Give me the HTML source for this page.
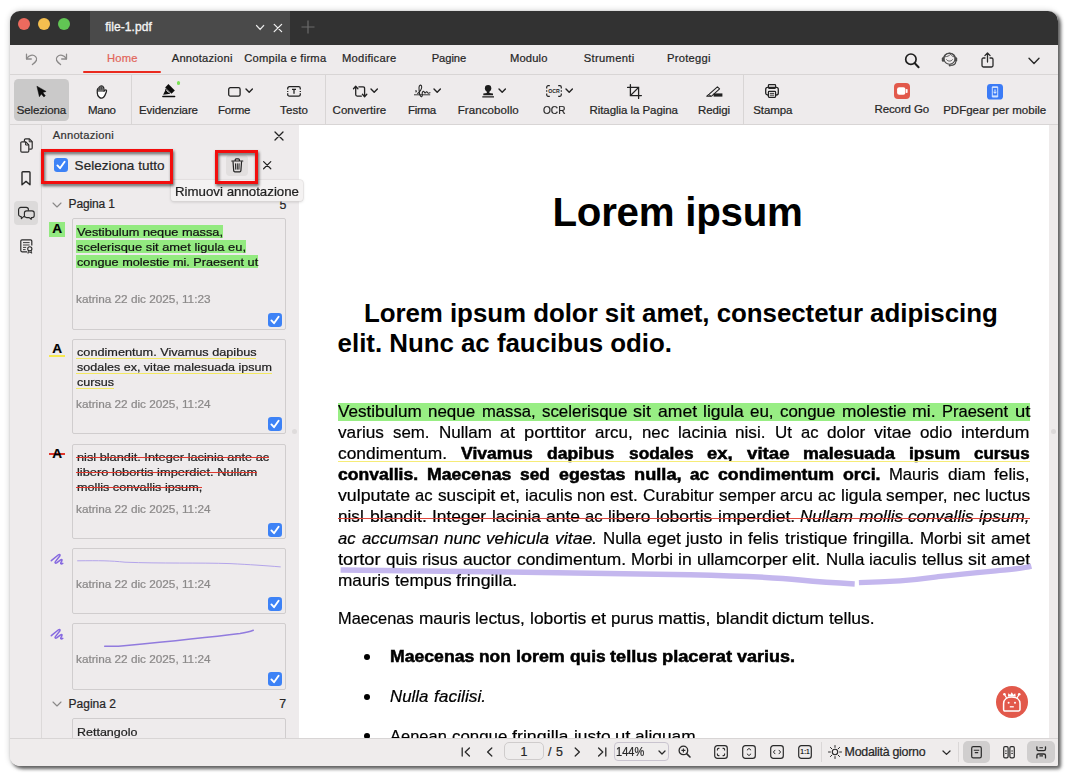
<!DOCTYPE html>
<html><head><meta charset="utf-8">
<style>
*{box-sizing:border-box;margin:0;padding:0}
html,body{width:1069px;height:777px;overflow:hidden;background:#fff}
body{font-family:"Liberation Sans",sans-serif;font-size:12px;color:#262626;position:relative}
#shadow{position:absolute;left:10px;top:11px;width:1048px;height:755px;border-radius:10px 10px 3px 10px;box-shadow:2.5px 2.5px 3.5px 0.5px rgba(0,0,0,.58),0 0 6px rgba(0,0,0,.2)}
#win{position:absolute;left:0;top:0;width:1069px;height:777px;clip-path:inset(11px 11px 11px 10px round 10px 10px 2px 10px);background:#eeebec}
.t{position:absolute;white-space:pre;line-height:1;-webkit-text-stroke:0.22px}
.b{position:absolute}
svg{position:absolute;overflow:visible}
</style></head><body>
<div id="shadow"></div>
<div id="win">
<div class="b" style="left:10px;top:11px;width:1048px;height:34px;background:#323232;"></div>
<div class="b" style="left:90px;top:11px;width:200px;height:34px;background:#4a4a4a;"></div>
<div class="b" style="left:18.0px;top:17.8px;width:12.4px;height:12.4px;border-radius:50%;background:#ec6a5e"></div>
<div class="b" style="left:38.0px;top:17.8px;width:12.4px;height:12.4px;border-radius:50%;background:#f5bf4f"></div>
<div class="b" style="left:58.0px;top:17.8px;width:12.4px;height:12.4px;border-radius:50%;background:#61c554"></div>
<div class="b" style="left:10px;top:74px;width:1048px;height:1px;background:#d8d5d5;"></div>
<div class="b" style="left:10px;top:124px;width:1048px;height:1px;background:#d8d5d5;"></div>
<div class="b" style="left:83px;top:70.6px;width:78.4px;height:2.2px;border-radius:1.1px;background:#ea2a1e"></div>
<div class="b" style="left:14.1px;top:79px;width:55px;height:41.6px;border-radius:4.5px;background:#cac9c9"></div>
<div class="b" style="left:131px;top:75px;width:1px;height:49px;background:#d8d5d5;"></div>
<div class="b" style="left:325px;top:75px;width:1px;height:49px;background:#d8d5d5;"></div>
<div class="b" style="left:743px;top:75px;width:1px;height:49px;background:#d8d5d5;"></div>
<div class="b" style="left:41.2px;top:125px;width:1.0px;height:614px;background:#dcd9d9;"></div>
<div class="b" style="left:14.2px;top:201.3px;width:23.8px;height:23.3px;border-radius:4px;background:#dcdada"></div>
<div class="b" style="left:226.1px;top:155px;width:22px;height:20.5px;border-radius:4px;background:#e2dfdf"></div>
<div class="b" style="left:72px;top:218.4px;width:214px;height:111.20000000000002px;border:1px solid #d0cdce;border-radius:2px"></div>
<div class="b" style="left:49.3px;top:221.8px;width:15.700000000000003px;height:14.899999999999977px;background:#93ea80;"></div>
<div class="b" style="left:76.2px;top:224.6px;width:147.10000000000002px;height:13.700000000000017px;background:#93ea80;"></div>
<div class="b" style="left:76.2px;top:239.6px;width:170.10000000000002px;height:13.800000000000011px;background:#93ea80;"></div>
<div class="b" style="left:76.2px;top:254.7px;width:182.2px;height:13.800000000000011px;background:#93ea80;"></div>
<div class="b" style="left:72px;top:338.8px;width:214px;height:95.59999999999997px;border:1px solid #d0cdce;border-radius:2px"></div>
<div class="b" style="left:49.3px;top:355px;width:16.0px;height:1.6000000000000227px;background:#f5e84e;"></div>
<div class="b" style="left:72px;top:443.8px;width:214px;height:95.59999999999997px;border:1px solid #d0cdce;border-radius:2px"></div>
<div class="b" style="left:291.6px;top:428.8px;width:5.6px;height:5.6px;border-radius:50%;background:#dedbdb"></div>
<div class="b" style="left:72px;top:548.2px;width:214px;height:66.0px;border:1px solid #d0cdce;border-radius:2px"></div>
<div class="b" style="left:72px;top:623px;width:214px;height:66.60000000000002px;border:1px solid #d0cdce;border-radius:2px"></div>
<div class="b" style="left:72px;top:718px;width:214px;height:42px;border:1px solid #d0cdce;border-radius:2px"></div>
<div class="b" style="left:299px;top:125px;width:750px;height:614px;background:#ffffff;"></div>
<div class="b" style="left:1049px;top:125px;width:9px;height:614px;background:#eeebeb;"></div>
<div class="b" style="left:1051px;top:429px;width:5px;height:5px;border-radius:50%;background:#dcd9d9"></div>
<div class="b" style="left:338px;top:403.4px;width:692.4000000000001px;height:17.5px;background:#98ee84;"></div>
<div class="t" style="left:279.40px;top:199.00px;font-size:12.4px;">5</div>
<div class="t" style="left:552.50px;top:193.00px;font-size:40.3px;color:#000;font-weight:700;letter-spacing:-0.263px;-webkit-text-stroke:0;">Lorem ipsum</div>
<div class="t" style="left:363.90px;top:301.00px;font-size:25.9px;color:#000;font-weight:700;letter-spacing:-0.041px;-webkit-text-stroke:0;">Lorem ipsum dolor sit amet, consectetur adipiscing</div>
<div class="t" style="left:337.60px;top:331.00px;font-size:25.9px;color:#000;font-weight:700;letter-spacing:-0.030px;-webkit-text-stroke:0;">elit. Nunc ac faucibus odio.</div>
<div class="t" style="left:338.40px;top:404.00px;font-size:15.7px;color:#000;transform:scaleX(1.0914);transform-origin:0 0;-webkit-text-stroke:0.2px;">Vestibulum</div>
<div class="t" style="left:428.45px;top:404.00px;font-size:15.7px;color:#000;transform:scaleX(1.0806);transform-origin:0 0;-webkit-text-stroke:0.2px;">neque</div>
<div class="t" style="left:481.88px;top:404.00px;font-size:15.7px;color:#000;transform:scaleX(1.0590);transform-origin:0 0;-webkit-text-stroke:0.2px;">massa,</div>
<div class="t" style="left:541.73px;top:404.00px;font-size:15.7px;color:#000;transform:scaleX(1.0756);transform-origin:0 0;-webkit-text-stroke:0.2px;">scelerisque</div>
<div class="t" style="left:633.37px;top:404.00px;font-size:15.7px;color:#000;transform:scaleX(1.1424);transform-origin:0 0;-webkit-text-stroke:0.2px;">sit</div>
<div class="t" style="left:657.58px;top:404.00px;font-size:15.7px;color:#000;transform:scaleX(1.1191);transform-origin:0 0;-webkit-text-stroke:0.2px;">amet</div>
<div class="t" style="left:702.91px;top:404.00px;font-size:15.7px;color:#000;transform:scaleX(1.1151);transform-origin:0 0;-webkit-text-stroke:0.2px;">ligula</div>
<div class="t" style="left:750.06px;top:404.00px;font-size:15.7px;color:#000;transform:scaleX(1.0809);transform-origin:0 0;-webkit-text-stroke:0.2px;">eu,</div>
<div class="t" style="left:779.92px;top:404.00px;font-size:15.7px;color:#000;transform:scaleX(1.0759);transform-origin:0 0;-webkit-text-stroke:0.2px;">congue</div>
<div class="t" style="left:841.58px;top:404.00px;font-size:15.7px;color:#000;transform:scaleX(1.1038);transform-origin:0 0;-webkit-text-stroke:0.2px;">molestie</div>
<div class="t" style="left:912.35px;top:404.00px;font-size:15.7px;color:#000;transform:scaleX(1.1292);transform-origin:0 0;-webkit-text-stroke:0.2px;">mi.</div>
<div class="t" style="left:942.26px;top:404.00px;font-size:15.7px;color:#000;transform:scaleX(1.0513);transform-origin:0 0;-webkit-text-stroke:0.2px;">Praesent</div>
<div class="t" style="left:1014.56px;top:404.00px;font-size:15.7px;color:#000;transform:scaleX(1.1790);transform-origin:0 0;-webkit-text-stroke:0.2px;">ut</div>
<div class="t" style="left:338.40px;top:425.00px;font-size:15.7px;color:#000;transform:scaleX(1.0959);transform-origin:0 0;-webkit-text-stroke:0.2px;">varius</div>
<div class="t" style="left:393.12px;top:425.00px;font-size:15.7px;color:#000;transform:scaleX(1.0749);transform-origin:0 0;-webkit-text-stroke:0.2px;">sem.</div>
<div class="t" style="left:438.50px;top:425.00px;font-size:15.7px;color:#000;transform:scaleX(1.0864);transform-origin:0 0;-webkit-text-stroke:0.2px;">Nullam</div>
<div class="t" style="left:500.39px;top:425.00px;font-size:15.7px;color:#000;transform:scaleX(1.1551);transform-origin:0 0;-webkit-text-stroke:0.2px;">at</div>
<div class="t" style="left:524.36px;top:425.00px;font-size:15.7px;color:#000;transform:scaleX(1.1698);transform-origin:0 0;-webkit-text-stroke:0.2px;">porttitor</div>
<div class="t" style="left:595.42px;top:425.00px;font-size:15.7px;color:#000;transform:scaleX(1.0797);transform-origin:0 0;-webkit-text-stroke:0.2px;">arcu,</div>
<div class="t" style="left:641.93px;top:425.00px;font-size:15.7px;color:#000;transform:scaleX(1.0704);transform-origin:0 0;-webkit-text-stroke:0.2px;">nec</div>
<div class="t" style="left:677.85px;top:425.00px;font-size:15.7px;color:#000;transform:scaleX(1.0969);transform-origin:0 0;-webkit-text-stroke:0.2px;">lacinia</div>
<div class="t" style="left:735.49px;top:425.00px;font-size:15.7px;color:#000;transform:scaleX(1.0941);transform-origin:0 0;-webkit-text-stroke:0.2px;">nisi.</div>
<div class="t" style="left:774.86px;top:425.00px;font-size:15.7px;color:#000;transform:scaleX(1.0787);transform-origin:0 0;-webkit-text-stroke:0.2px;">Ut</div>
<div class="t" style="left:800.62px;top:425.00px;font-size:15.7px;color:#000;transform:scaleX(1.0556);transform-origin:0 0;-webkit-text-stroke:0.2px;">ac</div>
<div class="t" style="left:826.96px;top:425.00px;font-size:15.7px;color:#000;transform:scaleX(1.0990);transform-origin:0 0;-webkit-text-stroke:0.2px;">dolor</div>
<div class="t" style="left:874.15px;top:425.00px;font-size:15.7px;color:#000;transform:scaleX(1.1306);transform-origin:0 0;-webkit-text-stroke:0.2px;">vitae</div>
<div class="t" style="left:920.46px;top:425.00px;font-size:15.7px;color:#000;transform:scaleX(1.0837);transform-origin:0 0;-webkit-text-stroke:0.2px;">odio</div>
<div class="t" style="left:961.45px;top:425.00px;font-size:15.7px;color:#000;transform:scaleX(1.1229);transform-origin:0 0;-webkit-text-stroke:0.2px;">interdum</div>
<div class="t" style="left:338.40px;top:446.00px;font-size:15.7px;color:#000;transform:scaleX(1.1070);transform-origin:0 0;-webkit-text-stroke:0.2px;">condimentum.</div>
<div class="t" style="left:461.44px;top:446.00px;font-size:15.7px;color:#000;font-weight:700;transform:scaleX(1.1184);transform-origin:0 0;-webkit-text-stroke:0.5px;">Vivamus</div>
<div class="t" style="left:547.27px;top:446.00px;font-size:15.7px;color:#000;font-weight:700;transform:scaleX(1.1190);transform-origin:0 0;-webkit-text-stroke:0.5px;">dapibus</div>
<div class="t" style="left:628.53px;top:446.00px;font-size:15.7px;color:#000;font-weight:700;transform:scaleX(1.1045);transform-origin:0 0;-webkit-text-stroke:0.5px;">sodales</div>
<div class="t" style="left:707.04px;top:446.00px;font-size:15.7px;color:#000;font-weight:700;transform:scaleX(1.1755);transform-origin:0 0;-webkit-text-stroke:0.5px;">ex,</div>
<div class="t" style="left:746.65px;top:446.00px;font-size:15.7px;color:#000;font-weight:700;transform:scaleX(1.1892);transform-origin:0 0;-webkit-text-stroke:0.5px;">vitae</div>
<div class="t" style="left:803.15px;top:446.00px;font-size:15.7px;color:#000;font-weight:700;transform:scaleX(1.1337);transform-origin:0 0;-webkit-text-stroke:0.5px;">malesuada</div>
<div class="t" style="left:909.07px;top:446.00px;font-size:15.7px;color:#000;font-weight:700;transform:scaleX(1.1099);transform-origin:0 0;-webkit-text-stroke:0.5px;">ipsum</div>
<div class="t" style="left:974.31px;top:446.00px;font-size:15.7px;color:#000;font-weight:700;transform:scaleX(1.0823);transform-origin:0 0;-webkit-text-stroke:0.5px;">cursus</div>
<div class="t" style="left:338.40px;top:467.00px;font-size:15.7px;color:#000;font-weight:700;transform:scaleX(1.1200);transform-origin:0 0;-webkit-text-stroke:0.5px;">convallis.</div>
<div class="t" style="left:427.22px;top:467.00px;font-size:15.7px;color:#000;font-weight:700;transform:scaleX(1.1238);transform-origin:0 0;-webkit-text-stroke:0.5px;">Maecenas</div>
<div class="t" style="left:520.24px;top:467.00px;font-size:15.7px;color:#000;font-weight:700;transform:scaleX(1.1069);transform-origin:0 0;-webkit-text-stroke:0.5px;">sed</div>
<div class="t" style="left:558.92px;top:467.00px;font-size:15.7px;color:#000;font-weight:700;transform:scaleX(1.1372);transform-origin:0 0;-webkit-text-stroke:0.5px;">egestas</div>
<div class="t" style="left:634.11px;top:467.00px;font-size:15.7px;color:#000;font-weight:700;transform:scaleX(1.1621);transform-origin:0 0;-webkit-text-stroke:0.5px;">nulla,</div>
<div class="t" style="left:690.46px;top:467.00px;font-size:15.7px;color:#000;font-weight:700;transform:scaleX(1.0931);transform-origin:0 0;-webkit-text-stroke:0.5px;">ac</div>
<div class="t" style="left:718.28px;top:467.00px;font-size:15.7px;color:#000;font-weight:700;transform:scaleX(1.1287);transform-origin:0 0;-webkit-text-stroke:0.5px;">condimentum</div>
<div class="t" style="left:843.09px;top:467.00px;font-size:15.7px;color:#000;font-weight:700;transform:scaleX(1.1334);transform-origin:0 0;-webkit-text-stroke:0.5px;">orci.</div>
<div class="t" style="left:889.40px;top:467.00px;font-size:15.7px;color:#000;transform:scaleX(1.0611);transform-origin:0 0;-webkit-text-stroke:0.2px;">Mauris</div>
<div class="t" style="left:948.09px;top:467.00px;font-size:15.7px;color:#000;transform:scaleX(1.1061);transform-origin:0 0;-webkit-text-stroke:0.2px;">diam</div>
<div class="t" style="left:994.45px;top:467.00px;font-size:15.7px;color:#000;transform:scaleX(1.1017);transform-origin:0 0;-webkit-text-stroke:0.2px;">felis,</div>
<div class="t" style="left:338.40px;top:488.00px;font-size:15.7px;color:#000;transform:scaleX(1.1308);transform-origin:0 0;-webkit-text-stroke:0.2px;">vulputate</div>
<div class="t" style="left:415.30px;top:488.00px;font-size:15.7px;color:#000;transform:scaleX(1.0556);transform-origin:0 0;-webkit-text-stroke:0.2px;">ac</div>
<div class="t" style="left:437.71px;top:488.00px;font-size:15.7px;color:#000;transform:scaleX(1.0956);transform-origin:0 0;-webkit-text-stroke:0.2px;">suscipit</div>
<div class="t" style="left:499.92px;top:488.00px;font-size:15.7px;color:#000;transform:scaleX(1.1432);transform-origin:0 0;-webkit-text-stroke:0.2px;">et,</div>
<div class="t" style="left:524.78px;top:488.00px;font-size:15.7px;color:#000;transform:scaleX(1.0878);transform-origin:0 0;-webkit-text-stroke:0.2px;">iaculis</div>
<div class="t" style="left:577.10px;top:488.00px;font-size:15.7px;color:#000;transform:scaleX(1.0800);transform-origin:0 0;-webkit-text-stroke:0.2px;">non</div>
<div class="t" style="left:610.29px;top:488.00px;font-size:15.7px;color:#000;transform:scaleX(1.0982);transform-origin:0 0;-webkit-text-stroke:0.2px;">est.</div>
<div class="t" style="left:642.97px;top:488.00px;font-size:15.7px;color:#000;transform:scaleX(1.0973);transform-origin:0 0;-webkit-text-stroke:0.2px;">Curabitur</div>
<div class="t" style="left:718.69px;top:488.00px;font-size:15.7px;color:#000;transform:scaleX(1.0848);transform-origin:0 0;-webkit-text-stroke:0.2px;">semper</div>
<div class="t" style="left:780.34px;top:488.00px;font-size:15.7px;color:#000;transform:scaleX(1.0773);transform-origin:0 0;-webkit-text-stroke:0.2px;">arcu</div>
<div class="t" style="left:818.14px;top:488.00px;font-size:15.7px;color:#000;transform:scaleX(1.0556);transform-origin:0 0;-webkit-text-stroke:0.2px;">ac</div>
<div class="t" style="left:840.54px;top:488.00px;font-size:15.7px;color:#000;transform:scaleX(1.1151);transform-origin:0 0;-webkit-text-stroke:0.2px;">ligula</div>
<div class="t" style="left:886.30px;top:488.00px;font-size:15.7px;color:#000;transform:scaleX(1.1027);transform-origin:0 0;-webkit-text-stroke:0.2px;">semper,</div>
<div class="t" style="left:952.75px;top:488.00px;font-size:15.7px;color:#000;transform:scaleX(1.0704);transform-origin:0 0;-webkit-text-stroke:0.2px;">nec</div>
<div class="t" style="left:984.73px;top:488.00px;font-size:15.7px;color:#000;transform:scaleX(1.1045);transform-origin:0 0;-webkit-text-stroke:0.2px;">luctus</div>
<div class="t" style="left:338.40px;top:509.00px;font-size:15.7px;color:#000;transform:scaleX(1.0936);transform-origin:0 0;-webkit-text-stroke:0.2px;">nisl</div>
<div class="t" style="left:369.60px;top:509.00px;font-size:15.7px;color:#000;transform:scaleX(1.1248);transform-origin:0 0;-webkit-text-stroke:0.2px;">blandit.</div>
<div class="t" style="left:431.97px;top:509.00px;font-size:15.7px;color:#000;transform:scaleX(1.1084);transform-origin:0 0;-webkit-text-stroke:0.2px;">Integer</div>
<div class="t" style="left:491.56px;top:509.00px;font-size:15.7px;color:#000;transform:scaleX(1.0969);transform-origin:0 0;-webkit-text-stroke:0.2px;">lacinia</div>
<div class="t" style="left:545.81px;top:509.00px;font-size:15.7px;color:#000;transform:scaleX(1.1105);transform-origin:0 0;-webkit-text-stroke:0.2px;">ante</div>
<div class="t" style="left:585.19px;top:509.00px;font-size:15.7px;color:#000;transform:scaleX(1.0556);transform-origin:0 0;-webkit-text-stroke:0.2px;">ac</div>
<div class="t" style="left:608.15px;top:509.00px;font-size:15.7px;color:#000;transform:scaleX(1.1006);transform-origin:0 0;-webkit-text-stroke:0.2px;">libero</div>
<div class="t" style="left:655.83px;top:509.00px;font-size:15.7px;color:#000;transform:scaleX(1.1121);transform-origin:0 0;-webkit-text-stroke:0.2px;">lobortis</div>
<div class="t" style="left:717.54px;top:509.00px;font-size:15.7px;color:#000;transform:scaleX(1.1213);transform-origin:0 0;-webkit-text-stroke:0.2px;">imperdiet.</div>
<div class="t" style="left:800.24px;top:509.00px;font-size:15.7px;color:#000;font-style:italic;transform:scaleX(1.0864);transform-origin:0 0;-webkit-text-stroke:0.2px;">Nullam</div>
<div class="t" style="left:858.75px;top:509.00px;font-size:15.7px;color:#000;font-style:italic;transform:scaleX(1.1037);transform-origin:0 0;-webkit-text-stroke:0.2px;">mollis</div>
<div class="t" style="left:908.45px;top:509.00px;font-size:15.7px;color:#000;font-style:italic;transform:scaleX(1.0891);transform-origin:0 0;-webkit-text-stroke:0.2px;">convallis</div>
<div class="t" style="left:979.44px;top:509.00px;font-size:15.7px;color:#000;font-style:italic;transform:scaleX(1.0940);transform-origin:0 0;-webkit-text-stroke:0.2px;">ipsum,</div>
<div class="t" style="left:338.40px;top:531.00px;font-size:15.7px;color:#000;font-style:italic;transform:scaleX(1.0556);transform-origin:0 0;-webkit-text-stroke:0.2px;">ac</div>
<div class="t" style="left:361.53px;top:531.00px;font-size:15.7px;color:#000;font-style:italic;transform:scaleX(1.0708);transform-origin:0 0;-webkit-text-stroke:0.2px;">accumsan</div>
<div class="t" style="left:443.73px;top:531.00px;font-size:15.7px;color:#000;font-style:italic;transform:scaleX(1.0840);transform-origin:0 0;-webkit-text-stroke:0.2px;">nunc</div>
<div class="t" style="left:486.25px;top:531.00px;font-size:15.7px;color:#000;font-style:italic;transform:scaleX(1.0961);transform-origin:0 0;-webkit-text-stroke:0.2px;">vehicula</div>
<div class="t" style="left:554.98px;top:531.00px;font-size:15.7px;color:#000;font-style:italic;transform:scaleX(1.1267);transform-origin:0 0;-webkit-text-stroke:0.2px;">vitae.</div>
<div class="t" style="left:602.86px;top:531.00px;font-size:15.7px;color:#000;transform:scaleX(1.0734);transform-origin:0 0;-webkit-text-stroke:0.2px;">Nulla</div>
<div class="t" style="left:646.87px;top:531.00px;font-size:15.7px;color:#000;transform:scaleX(1.1120);transform-origin:0 0;-webkit-text-stroke:0.2px;">eget</div>
<div class="t" style="left:686.47px;top:531.00px;font-size:15.7px;color:#000;transform:scaleX(1.1066);transform-origin:0 0;-webkit-text-stroke:0.2px;">justo</div>
<div class="t" style="left:728.78px;top:531.00px;font-size:15.7px;color:#000;transform:scaleX(1.1228);transform-origin:0 0;-webkit-text-stroke:0.2px;">in</div>
<div class="t" style="left:748.13px;top:531.00px;font-size:15.7px;color:#000;transform:scaleX(1.1025);transform-origin:0 0;-webkit-text-stroke:0.2px;">felis</div>
<div class="t" style="left:784.53px;top:531.00px;font-size:15.7px;color:#000;transform:scaleX(1.1385);transform-origin:0 0;-webkit-text-stroke:0.2px;">tristique</div>
<div class="t" style="left:852.71px;top:531.00px;font-size:15.7px;color:#000;transform:scaleX(1.1341);transform-origin:0 0;-webkit-text-stroke:0.2px;">fringilla.</div>
<div class="t" style="left:919.66px;top:531.00px;font-size:15.7px;color:#000;transform:scaleX(1.0733);transform-origin:0 0;-webkit-text-stroke:0.2px;">Morbi</div>
<div class="t" style="left:967.40px;top:531.00px;font-size:15.7px;color:#000;transform:scaleX(1.1424);transform-origin:0 0;-webkit-text-stroke:0.2px;">sit</div>
<div class="t" style="left:990.95px;top:531.00px;font-size:15.7px;color:#000;transform:scaleX(1.1191);transform-origin:0 0;-webkit-text-stroke:0.2px;">amet</div>
<div class="t" style="left:338.40px;top:552.00px;font-size:15.7px;color:#000;transform:scaleX(1.1630);transform-origin:0 0;-webkit-text-stroke:0.2px;">tortor</div>
<div class="t" style="left:386.12px;top:552.00px;font-size:15.7px;color:#000;transform:scaleX(1.0809);transform-origin:0 0;-webkit-text-stroke:0.2px;">quis</div>
<div class="t" style="left:422.36px;top:552.00px;font-size:15.7px;color:#000;transform:scaleX(1.0745);transform-origin:0 0;-webkit-text-stroke:0.2px;">risus</div>
<div class="t" style="left:463.08px;top:552.00px;font-size:15.7px;color:#000;transform:scaleX(1.1082);transform-origin:0 0;-webkit-text-stroke:0.2px;">auctor</div>
<div class="t" style="left:516.53px;top:552.00px;font-size:15.7px;color:#000;transform:scaleX(1.1070);transform-origin:0 0;-webkit-text-stroke:0.2px;">condimentum.</div>
<div class="t" style="left:630.74px;top:552.00px;font-size:15.7px;color:#000;transform:scaleX(1.0733);transform-origin:0 0;-webkit-text-stroke:0.2px;">Morbi</div>
<div class="t" style="left:677.97px;top:552.00px;font-size:15.7px;color:#000;transform:scaleX(1.1228);transform-origin:0 0;-webkit-text-stroke:0.2px;">in</div>
<div class="t" style="left:696.82px;top:552.00px;font-size:15.7px;color:#000;transform:scaleX(1.1033);transform-origin:0 0;-webkit-text-stroke:0.2px;">ullamcorper</div>
<div class="t" style="left:792.38px;top:552.00px;font-size:15.7px;color:#000;transform:scaleX(1.1593);transform-origin:0 0;-webkit-text-stroke:0.2px;">elit.</div>
<div class="t" style="left:825.82px;top:552.00px;font-size:15.7px;color:#000;transform:scaleX(1.0734);transform-origin:0 0;-webkit-text-stroke:0.2px;">Nulla</div>
<div class="t" style="left:869.32px;top:552.00px;font-size:15.7px;color:#000;transform:scaleX(1.0878);transform-origin:0 0;-webkit-text-stroke:0.2px;">iaculis</div>
<div class="t" style="left:921.87px;top:552.00px;font-size:15.7px;color:#000;transform:scaleX(1.1169);transform-origin:0 0;-webkit-text-stroke:0.2px;">tellus</div>
<div class="t" style="left:967.90px;top:552.00px;font-size:15.7px;color:#000;transform:scaleX(1.1424);transform-origin:0 0;-webkit-text-stroke:0.2px;">sit</div>
<div class="t" style="left:990.95px;top:552.00px;font-size:15.7px;color:#000;transform:scaleX(1.1191);transform-origin:0 0;-webkit-text-stroke:0.2px;">amet</div>
<div class="t" style="left:338.40px;top:573.00px;font-size:15.7px;color:#000;transform:scaleX(1.0966);transform-origin:0 0;-webkit-text-stroke:0.2px;">mauris</div>
<div class="t" style="left:394.82px;top:573.00px;font-size:15.7px;color:#000;transform:scaleX(1.1029);transform-origin:0 0;-webkit-text-stroke:0.2px;">tempus</div>
<div class="t" style="left:456.37px;top:573.00px;font-size:15.7px;color:#000;transform:scaleX(1.1341);transform-origin:0 0;-webkit-text-stroke:0.2px;">fringilla.</div>
<div class="t" style="left:338.40px;top:611.00px;font-size:15.7px;color:#000;transform:scaleX(1.0442);transform-origin:0 0;-webkit-text-stroke:0.2px;">Maecenas</div>
<div class="t" style="left:418.79px;top:611.00px;font-size:15.7px;color:#000;transform:scaleX(1.0966);transform-origin:0 0;-webkit-text-stroke:0.2px;">mauris</div>
<div class="t" style="left:475.21px;top:611.00px;font-size:15.7px;color:#000;transform:scaleX(1.0979);transform-origin:0 0;-webkit-text-stroke:0.2px;">lectus,</div>
<div class="t" style="left:529.79px;top:611.00px;font-size:15.7px;color:#000;transform:scaleX(1.1121);transform-origin:0 0;-webkit-text-stroke:0.2px;">lobortis</div>
<div class="t" style="left:590.84px;top:611.00px;font-size:15.7px;color:#000;transform:scaleX(1.1587);transform-origin:0 0;-webkit-text-stroke:0.2px;">et</div>
<div class="t" style="left:610.81px;top:611.00px;font-size:15.7px;color:#000;transform:scaleX(1.0868);transform-origin:0 0;-webkit-text-stroke:0.2px;">purus</div>
<div class="t" style="left:658.26px;top:611.00px;font-size:15.7px;color:#000;transform:scaleX(1.1359);transform-origin:0 0;-webkit-text-stroke:0.2px;">mattis,</div>
<div class="t" style="left:715.54px;top:611.00px;font-size:15.7px;color:#000;transform:scaleX(1.1274);transform-origin:0 0;-webkit-text-stroke:0.2px;">blandit</div>
<div class="t" style="left:772.46px;top:611.00px;font-size:15.7px;color:#000;transform:scaleX(1.1275);transform-origin:0 0;-webkit-text-stroke:0.2px;">dictum</div>
<div class="t" style="left:829.37px;top:611.00px;font-size:15.7px;color:#000;transform:scaleX(1.1148);transform-origin:0 0;-webkit-text-stroke:0.2px;">tellus.</div>
<div class="b" style="left:364.1px;top:654.2px;width:6px;height:6px;border-radius:50%;background:#000"></div>
<div class="b" style="left:364.1px;top:694.2px;width:6px;height:6px;border-radius:50%;background:#000"></div>
<div class="b" style="left:364.1px;top:733.4px;width:6px;height:6px;border-radius:50%;background:#000"></div>
<div class="t" style="left:390.40px;top:649.00px;font-size:15.7px;color:#000;font-weight:700;transform:scaleX(1.1238);transform-origin:0 0;-webkit-text-stroke:0.5px;">Maecenas</div>
<div class="t" style="left:479.48px;top:649.00px;font-size:15.7px;color:#000;font-weight:700;transform:scaleX(1.1049);transform-origin:0 0;-webkit-text-stroke:0.5px;">non</div>
<div class="t" style="left:516.04px;top:649.00px;font-size:15.7px;color:#000;font-weight:700;transform:scaleX(1.1422);transform-origin:0 0;-webkit-text-stroke:0.5px;">lorem</div>
<div class="t" style="left:569.65px;top:649.00px;font-size:15.7px;color:#000;font-weight:700;transform:scaleX(1.1042);transform-origin:0 0;-webkit-text-stroke:0.5px;">quis</div>
<div class="t" style="left:610.06px;top:649.00px;font-size:15.7px;color:#000;font-weight:700;transform:scaleX(1.1563);transform-origin:0 0;-webkit-text-stroke:0.5px;">tellus</div>
<div class="t" style="left:662.24px;top:649.00px;font-size:15.7px;color:#000;font-weight:700;transform:scaleX(1.1631);transform-origin:0 0;-webkit-text-stroke:0.5px;">placerat</div>
<div class="t" style="left:737.02px;top:649.00px;font-size:15.7px;color:#000;font-weight:700;transform:scaleX(1.1452);transform-origin:0 0;-webkit-text-stroke:0.5px;">varius.</div>
<div class="t" style="left:390.40px;top:689.00px;font-size:15.7px;color:#000;font-style:italic;transform:scaleX(1.0734);transform-origin:0 0;-webkit-text-stroke:0.2px;">Nulla</div>
<div class="t" style="left:433.57px;top:689.00px;font-size:15.7px;color:#000;font-style:italic;transform:scaleX(1.1075);transform-origin:0 0;-webkit-text-stroke:0.2px;">facilisi.</div>
<div class="t" style="left:390.40px;top:729.00px;font-size:15.7px;color:#000;transform:scaleX(1.0508);transform-origin:0 0;-webkit-text-stroke:0.2px;">Aenean</div>
<div class="t" style="left:452.04px;top:729.00px;font-size:15.7px;color:#000;transform:scaleX(1.0759);transform-origin:0 0;-webkit-text-stroke:0.2px;">congue</div>
<div class="t" style="left:512.21px;top:729.00px;font-size:15.7px;color:#000;transform:scaleX(1.1371);transform-origin:0 0;-webkit-text-stroke:0.2px;">fringilla</div>
<div class="t" style="left:573.52px;top:729.00px;font-size:15.7px;color:#000;transform:scaleX(1.1066);transform-origin:0 0;-webkit-text-stroke:0.2px;">justo</div>
<div class="t" style="left:614.99px;top:729.00px;font-size:15.7px;color:#000;transform:scaleX(1.1790);transform-origin:0 0;-webkit-text-stroke:0.2px;">ut</div>
<div class="t" style="left:635.23px;top:729.00px;font-size:15.7px;color:#000;transform:scaleX(1.1024);transform-origin:0 0;-webkit-text-stroke:0.2px;">aliquam</div>
<svg style="left:255px;top:22px;" width="12" height="10" viewBox="0 0 12 10" fill="none"><path d="M1.6 3.6 L5.1 7.4 L8.6 3.6" stroke="#e8e8e8" stroke-width="1.4" stroke-linecap="round" stroke-linejoin="round"/></svg>
<svg style="left:272px;top:21px;" width="12" height="12" viewBox="0 0 12 12" fill="none"><path d="M2.2 3.4 L9.6 10.6 M9.6 3.4 L2.2 10.6" stroke="#f0f0f0" stroke-width="1.3" stroke-linecap="round"/></svg>
<svg style="left:301px;top:20px;" width="14" height="14" viewBox="0 0 14 14" fill="none"><path d="M7 0.5 V13.5 M0.5 7 H13.5" stroke="#6b6b6b" stroke-width="1.2"/></svg>
<svg style="left:25px;top:52px;" width="14" height="15" viewBox="0 0 14 15" fill="none"><path d="M1.5 2.2 V7 H6.3" stroke="#8c8a8a" stroke-width="1.3" stroke-linecap="round" stroke-linejoin="round"/><path d="M1.8 6.8 C3.5 3.2 8 2 10.6 4.6 C13 7 11.4 9.6 7.4 12.6" stroke="#8c8a8a" stroke-width="1.3" stroke-linecap="round"/></svg>
<svg style="left:54px;top:52px;" width="14" height="15" viewBox="0 0 14 15" fill="none"><g transform="translate(14,0) scale(-1,1)"><path d="M1.5 2.2 V7 H6.3" stroke="#8c8a8a" stroke-width="1.3" stroke-linecap="round" stroke-linejoin="round"/><path d="M1.8 6.8 C3.5 3.2 8 2 10.6 4.6 C13 7 11.4 9.6 7.4 12.6" stroke="#8c8a8a" stroke-width="1.3" stroke-linecap="round"/></g></svg>
<svg style="left:904px;top:52px;" width="16" height="17" viewBox="0 0 16 17" fill="none"><circle cx="6.9" cy="7.2" r="5.2" stroke="#1f1f1f" stroke-width="1.7"/><path d="M10.8 11.2 L14.6 15.2" stroke="#1f1f1f" stroke-width="2" stroke-linecap="round"/></svg>
<svg style="left:941px;top:50.4px;" width="17" height="18" viewBox="0 0 17 18" fill="none"><circle cx="8.5" cy="8.6" r="5.6" stroke="#4a4a4a" stroke-width="1.1"/><path d="M2.6 8.8 C2.2 1.5 14.8 1.5 14.4 8.8" stroke="#4a4a4a" stroke-width="1.2"/><rect x="0.8" y="7.2" width="2.6" height="4.6" rx="1.2" fill="#4a4a4a"/><rect x="13.6" y="7.2" width="2.6" height="4.6" rx="1.2" fill="#4a4a4a"/><path d="M14.8 11.6 C14.6 14.4 12 15.4 9.4 15.4" stroke="#4a4a4a" stroke-width="1.1"/><circle cx="8.8" cy="15.4" r="1.1" fill="#4a4a4a"/><path d="M5.4 9.4 C6.6 11.6 10.4 11.6 11.6 9.4" stroke="#4a4a4a" stroke-width="0.9"/><path d="M4 6.8 C6 6.6 8.6 5.8 9.6 4.2 C10.4 5.6 11.8 6.6 13 6.8" stroke="#4a4a4a" stroke-width="0.9"/></svg>
<svg style="left:981px;top:52px;" width="13" height="16" viewBox="0 0 13 16" fill="none"><path d="M4 6 H2.4 C1.6 6 1 6.6 1 7.4 V13.6 C1 14.4 1.6 15 2.4 15 H10.6 C11.4 15 12 14.4 12 13.6 V7.4 C12 6.6 11.4 6 10.6 6 H9" stroke="#2a2a2a" stroke-width="1.3" stroke-linecap="round"/><path d="M6.5 10 V1.2 M3.9 3.6 L6.5 1 L9.1 3.6" stroke="#2a2a2a" stroke-width="1.3" stroke-linecap="round" stroke-linejoin="round"/></svg>
<svg style="left:1028px;top:57px;" width="12" height="8" viewBox="0 0 12 8" fill="none"><path d="M1 1.2 L6 6.4 L11 1.2" stroke="#2a2a2a" stroke-width="1.4" stroke-linecap="round" stroke-linejoin="round"/></svg>
<svg style="left:0px;top:0px;" width="1" height="1" viewBox="0 0 1 1" fill="none"><path d="M36.9 86.2 L46.1 91.4 L42.8 92.6 L45.3 95.7 L43.9 96.9 L41.3 93.9 L39.4 96.7 Z" fill="#0c0c0c" stroke="#0c0c0c" stroke-width="0.5" stroke-linejoin="round"/></svg>
<svg style="left:96px;top:84.5px;" width="12" height="14" viewBox="0 0 12 14" fill="none"><path d="M1.3 5 C1.3 3.6 2.6 2.8 3.2 2.4 C3.8 1.4 4.6 0.9 5.4 0.9 C6.4 0.9 7.2 1.6 7.6 2.6 C8 3.6 7.9 5 7.9 6.4 C8.4 5.6 9.4 4.6 10.2 5 C11 5.6 10.4 6.8 10 7.8 C9.4 9.6 8.8 11 7.8 12 C6.6 13.2 4.6 13.2 3.4 12.4 C1.9 11.4 1.3 9.6 1.3 8 Z" fill="#fff" stroke="#222" stroke-width="1.3" stroke-linejoin="round"/><path d="M1.9 6.8 V5 C1.9 3.8 2.8 3.2 3.5 2.8 C4 1.9 4.7 1.5 5.4 1.5 C6.2 1.5 6.8 2 7.1 2.9 C7.4 3.8 7.3 5.2 7.3 6.8 Z" fill="#6a6a6a"/><path d="M3.3 2.6 V5 M5.4 1.2 V4.6" stroke="#333" stroke-width="0.7"/></svg>
<svg style="left:162px;top:84px;" width="14" height="14" viewBox="0 0 14 14" fill="none"><path d="M6.4 0.1 L12.8 6.5 L9.5 9.7 L3.2 3.4 Z" fill="#0c0c0c"/><path d="M3.6 4.6 L8.4 9.6 L6.6 10 L1.1 10.7 L3 7 Z" fill="#0c0c0c"/><path d="M4.4 6.1 L6.6 8.6" stroke="#eeebec" stroke-width="0.9"/><path d="M0.8 12.5 H12.7" stroke="#0c0c0c" stroke-width="1.3" stroke-linecap="round"/></svg>
<div class="b" style="left:176.75px;top:81.25px;width:3.7px;height:3.7px;border-radius:50%;background:#7be356"></div>
<svg style="left:228px;top:86.5px;" width="13" height="10" viewBox="0 0 13 10" fill="none"><rect x="0.7" y="0.7" width="11.4" height="8.4" rx="1.6" stroke="#222" stroke-width="1.3"/></svg>
<svg style="left:244.5px;top:87.9px;" width="8.4" height="5.2" viewBox="0 0 8.4 5.2" fill="none"><path d="M1 1 L4.2 4.2 L7.4 1" stroke="#222" stroke-width="1.4" stroke-linecap="round" stroke-linejoin="round"/></svg>
<svg style="left:287px;top:86px;" width="14" height="11" viewBox="0 0 14 11" fill="none"><path d="M0.7 3.6 V2.4 C0.7 1.4 1.4 0.7 2.4 0.7 H11.6 C12.6 0.7 13.3 1.4 13.3 2.4 V3.6 M13.3 7.2 V8.4 C13.3 9.4 12.6 10.1 11.6 10.1 H2.4 C1.4 10.1 0.7 9.4 0.7 8.4 V7.2" stroke="#222" stroke-width="1.3"/><path d="M0.7 5 V6 M13.3 5 V6" stroke="#222" stroke-width="1.3"/><path d="M5 3.4 H9 M7 3.4 V7.8" stroke="#222" stroke-width="1.3"/></svg>
<svg style="left:352.5px;top:85px;" width="14.5" height="12" viewBox="0 0 14.5 12" fill="none"><path d="M0.5 3.7 L2.7 1.2 L4.9 3.7 M2.7 1.4 V9.6 Q2.7 11.1 4.2 11.1 H8.4" stroke="#222" stroke-width="1.3" stroke-linecap="round" stroke-linejoin="round"/><path d="M9.4 9.3 L11.6 11.8 L13.8 9.3 M11.6 11.6 V3.4 Q11.6 1.9 10.1 1.9 H5.9" stroke="#222" stroke-width="1.3" stroke-linecap="round" stroke-linejoin="round"/></svg>
<svg style="left:370.0px;top:87.9px;" width="8.4" height="5.2" viewBox="0 0 8.4 5.2" fill="none"><path d="M1 1 L4.2 4.2 L7.4 1" stroke="#222" stroke-width="1.4" stroke-linecap="round" stroke-linejoin="round"/></svg>
<svg style="left:414px;top:84px;" width="17" height="14" viewBox="0 0 17 14" fill="none"><path d="M0 10.8 H16.2" stroke="#222" stroke-width="0.9"/><path d="M1.2 6.4 L3 8.2 M3 6.4 L1.2 8.2" stroke="#222" stroke-width="0.8"/><path d="M3.6 9.4 C5.6 8.6 8.4 4.4 7.6 2 C7 0.4 5 1 5 3.6 C5 7 5.8 11.6 7 12.6 C8 13.2 8.6 11.6 8.2 10 C7.8 8.4 9.2 6.6 10 7.6 C10.8 8.6 10.6 9.6 11.6 8.6 C12.4 7.8 13 7.4 13.4 8.4 C13.8 9.4 14.6 9.4 16 8.8" stroke="#222" stroke-width="1.05" stroke-linecap="round"/></svg>
<svg style="left:432.5px;top:87.9px;" width="8.4" height="5.2" viewBox="0 0 8.4 5.2" fill="none"><path d="M1 1 L4.2 4.2 L7.4 1" stroke="#222" stroke-width="1.4" stroke-linecap="round" stroke-linejoin="round"/></svg>
<svg style="left:482px;top:85px;" width="12.4" height="12.6" viewBox="0 0 12.4 12.6" fill="none"><ellipse cx="6.1" cy="3.3" rx="3.2" ry="3.3" fill="#1c1c1c"/><path d="M4.4 5.4 H7.8 L7.3 8 L11 8.5 V10.3 H1.3 V8.5 L4.9 8 Z" fill="#1c1c1c"/><path d="M0.3 11.9 H12" stroke="#1c1c1c" stroke-width="1.1"/></svg>
<svg style="left:498.3px;top:87.9px;" width="8.4" height="5.2" viewBox="0 0 8.4 5.2" fill="none"><path d="M1 1 L4.2 4.2 L7.4 1" stroke="#222" stroke-width="1.4" stroke-linecap="round" stroke-linejoin="round"/></svg>
<svg style="left:546px;top:85px;" width="16" height="12" viewBox="0 0 16 12" fill="none"><path d="M0.7 3.6 V2.2 C0.7 1.4 1.4 0.7 2.2 0.7 H3.8 M12.2 0.7 H13.8 C14.6 0.7 15.3 1.4 15.3 2.2 V3.6 M15.3 8.4 V9.8 C15.3 10.6 14.6 11.3 13.8 11.3 H12.2 M3.8 11.3 H2.2 C1.4 11.3 0.7 10.6 0.7 9.8 V8.4" stroke="#222" stroke-width="1.2"/><path d="M0.7 5.2 V6.8 M15.3 5.2 V6.8" stroke="#222" stroke-width="1.2"/><text x="8" y="7.9" font-family="Liberation Sans" font-weight="700" font-size="5.2" text-anchor="middle" fill="#222">OCR</text></svg>
<svg style="left:564.5px;top:87.9px;" width="8.4" height="5.2" viewBox="0 0 8.4 5.2" fill="none"><path d="M1 1 L4.2 4.2 L7.4 1" stroke="#222" stroke-width="1.4" stroke-linecap="round" stroke-linejoin="round"/></svg>
<svg style="left:627px;top:83.5px;" width="15" height="15" viewBox="0 0 15 15" fill="none"><path d="M3.4 0.6 V11.6 H14.4 M0.6 3.4 H11.6 V14.4" stroke="#222" stroke-width="1.3" stroke-linecap="round"/><path d="M4 11 L11 4" stroke="#222" stroke-width="1.1"/></svg>
<svg style="left:705.5px;top:86px;" width="17" height="11" viewBox="0 0 17 11" fill="none"><path d="M0.8 10.2 L3.2 8.2 L11.4 0.9 L13.6 2.9 L5.6 10.2 Z" stroke="#222" stroke-width="1.1" stroke-linejoin="round"/><path d="M2.6 8.6 L5 10.2" stroke="#222" stroke-width="1"/><rect x="7.6" y="7.4" width="8.8" height="3.2" fill="#222"/></svg>
<svg style="left:765px;top:83.5px;" width="14" height="14" viewBox="0 0 14 14" fill="none"><rect x="3.4" y="0.7" width="7.2" height="3.6" rx="0.8" stroke="#222" stroke-width="1.2"/><rect x="0.7" y="3.4" width="12.6" height="7.6" rx="2" stroke="#222" stroke-width="1.3"/><rect x="3.4" y="7.4" width="7.2" height="5.9" rx="0.8" fill="#efecec" stroke="#222" stroke-width="1.2"/><path d="M4.8 9.4 H9.2 M4.8 11.2 H9.2" stroke="#222" stroke-width="0.9"/></svg>
<svg style="left:894px;top:83px;" width="16" height="16" viewBox="0 0 16 16" fill="none"><rect x="0" y="0" width="16" height="16" rx="4" fill="#e2594b"/><rect x="3.1" y="4.2" width="8.3" height="7.6" rx="2" fill="#fff"/><rect x="11.9" y="6.1" width="1.7" height="3.8" rx="0.7" fill="#fff"/></svg>
<svg style="left:987px;top:83.7px;" width="16" height="15.6" viewBox="0 0 16 15.6" fill="none"><rect x="0" y="0" width="16" height="15.6" rx="3.4" fill="#3b7bf6"/><rect x="4.8" y="2.2" width="6.4" height="11.2" rx="1.2" fill="#cfe0ff"/><rect x="5.8" y="4" width="4.4" height="7.4" fill="#3b7bf6"/><path d="M8 5.4 V9 M6.6 7.8 L8 9.4 L9.4 7.8" stroke="#fff" stroke-width="0.9"/></svg>
<svg style="left:19.5px;top:138px;" width="13" height="15" viewBox="0 0 13 15" fill="none"><path d="M4.4 3.4 V2 C4.4 1.3 4.9 0.8 5.6 0.8 H9.4 L12.2 3.6 V10 C12.2 10.7 11.7 11.2 11 11.2 H9.2" stroke="#2a2a2a" stroke-width="1.2" stroke-linejoin="round"/><path d="M9.2 0.9 V3.8 H12.1" stroke="#2a2a2a" stroke-width="1"/><path d="M0.8 5 C0.8 4.3 1.3 3.8 2 3.8 H5.8 L8.8 6.8 V13 C8.8 13.7 8.3 14.2 7.6 14.2 H2 C1.3 14.2 0.8 13.7 0.8 13 Z" stroke="#2a2a2a" stroke-width="1.2" stroke-linejoin="round"/><path d="M5.6 3.9 V7 H8.7" stroke="#2a2a2a" stroke-width="1"/></svg>
<svg style="left:21px;top:171.3px;" width="10" height="15" viewBox="0 0 10 15" fill="none"><path d="M1 1.6 C1 1.1 1.4 0.8 1.9 0.8 H8.1 C8.6 0.8 9 1.1 9 1.6 V13.8 L5 10.4 L1 13.8 Z" stroke="#2a2a2a" stroke-width="1.4" stroke-linejoin="round"/></svg>
<svg style="left:18px;top:206px;" width="17" height="14" viewBox="0 0 17 14" fill="none"><path d="M2.8 1.4 H8.2 C9.4 1.4 10.4 2.4 10.4 3.6 V8.4 C10.4 9.6 9.4 10.6 8.2 10.6 H5.6 L3.4 12.6 L3.2 10.6 H2.8 C1.6 10.6 0.6 9.6 0.6 8.4 V3.6 C0.6 2.4 1.6 1.4 2.8 1.4 Z" stroke="#2a2a2a" stroke-width="1.15" stroke-linejoin="round"/><path d="M8.6 4.8 H14 C15.2 4.8 16.2 5.8 16.2 7 V9.4 C16.2 10.6 15.2 11.6 14 11.6 H13.4 L13.2 13.3 L11.2 11.6 H8.6 C7.4 11.6 6.4 10.6 6.4 9.4 V7 C6.4 5.8 7.4 4.8 8.6 4.8 Z" fill="#dcdada" stroke="#2a2a2a" stroke-width="1.15" stroke-linejoin="round"/></svg>
<svg style="left:19.5px;top:239px;" width="14" height="15" viewBox="0 0 14 15" fill="none"><path d="M7 12.8 H2 C1.3 12.8 0.8 12.3 0.8 11.6 V2 C0.8 1.3 1.3 0.8 2 0.8 H10.6 C11.3 0.8 11.8 1.3 11.8 2 V6.4" stroke="#2a2a2a" stroke-width="1.2"/><path d="M3 3.6 H9.6 M3 6 H9.6 M3 8.4 H6.2 M3 10.6 H5.6" stroke="#2a2a2a" stroke-width="0.9"/><circle cx="9.8" cy="9.8" r="2.1" stroke="#2a2a2a" stroke-width="1.1"/><path d="M8.6 11.6 L7.8 14.2 L9.8 13.2 L11.8 14.2 L11 11.6" stroke="#2a2a2a" stroke-width="0.9" stroke-linejoin="round"/></svg>
<svg style="left:274px;top:131.2px;" width="10" height="10" viewBox="0 0 10 10" fill="none"><path d="M1 1 L9 9 M9 1 L1 9" stroke="#222" stroke-width="1.3" stroke-linecap="round"/></svg>
<svg style="left:262.6px;top:160.8px;" width="8.4" height="8.4" viewBox="0 0 8.4 8.4" fill="none"><path d="M0.6 0.6 L7.8 7.8 M7.8 0.6 L0.6 7.8" stroke="#222" stroke-width="1.2" stroke-linecap="round"/></svg>
<div class="b" style="left:54.2px;top:158.4px;width:14px;height:14px;border-radius:3.2px;background:#3d82f6"></div>
<svg style="left:54.2px;top:158.4px;" width="14" height="14" viewBox="0 0 14 14" fill="none"><path d="M3.4 7.4 L6 10.2 L10.6 3.8" stroke="#fff" stroke-width="1.9" stroke-linecap="round" stroke-linejoin="round" fill="none"/></svg>
<svg style="left:230.5px;top:157.8px;" width="12.6" height="14.6" viewBox="0 0 12.6 14.6" fill="none"><path d="M0.8 3 H11.8 M4.2 2.8 V1.8 C4.2 1.2 4.6 0.8 5.2 0.8 H7.4 C8 0.8 8.4 1.2 8.4 1.8 V2.8" stroke="#222" stroke-width="1.2" stroke-linecap="round"/><path d="M2 3.2 L2.7 12.6 C2.75 13.3 3.2 13.8 3.9 13.8 H8.7 C9.4 13.8 9.85 13.3 9.9 12.6 L10.6 3.2" stroke="#222" stroke-width="1.2"/><path d="M4.5 5.4 L4.7 11.6 M6.3 5.4 V11.6 M8.1 5.4 L7.9 11.6" stroke="#222" stroke-width="1"/></svg>
<div class="b" style="left:170.8px;top:180.3px;width:132.5px;height:20.5px;border-radius:3px;background:#f4f2f2;box-shadow:0 0 0 0.5px #dddada,0 1px 3px rgba(0,0,0,.18)"></div>
<svg style="left:52.1px;top:201.6px;" width="10" height="6" viewBox="0 0 10 6" fill="none"><path d="M1 1 L5 5 L9 1" stroke="#8a8888" stroke-width="1.1" stroke-linecap="round" stroke-linejoin="round"/></svg>
<div class="b" style="left:268.2px;top:312.6px;width:14px;height:14px;border-radius:3.2px;background:#3d82f6"></div>
<svg style="left:268.2px;top:312.6px;" width="14" height="14" viewBox="0 0 14 14" fill="none"><path d="M3.4 7.4 L6 10.2 L10.6 3.8" stroke="#fff" stroke-width="1.9" stroke-linecap="round" stroke-linejoin="round" fill="none"/></svg>
<div class="b" style="left:76.3px;top:357.6px;width:180.09999999999997px;height:1.3999999999999773px;background:#f3e860;"></div>
<div class="b" style="left:76.3px;top:372.7px;width:195.5px;height:1.400000000000034px;background:#f3e860;"></div>
<div class="b" style="left:76.3px;top:387.8px;width:37.400000000000006px;height:1.3999999999999773px;background:#f3e860;"></div>
<div class="b" style="left:268.2px;top:417.4px;width:14px;height:14px;border-radius:3.2px;background:#3d82f6"></div>
<svg style="left:268.2px;top:417.4px;" width="14" height="14" viewBox="0 0 14 14" fill="none"><path d="M3.4 7.4 L6 10.2 L10.6 3.8" stroke="#fff" stroke-width="1.9" stroke-linecap="round" stroke-linejoin="round" fill="none"/></svg>
<div class="b" style="left:49.3px;top:453.4px;width:16.0px;height:1.400000000000034px;background:#e0352b;"></div>
<div class="b" style="left:268.2px;top:522.6px;width:14px;height:14px;border-radius:3.2px;background:#3d82f6"></div>
<svg style="left:268.2px;top:522.6px;" width="14" height="14" viewBox="0 0 14 14" fill="none"><path d="M3.4 7.4 L6 10.2 L10.6 3.8" stroke="#fff" stroke-width="1.9" stroke-linecap="round" stroke-linejoin="round" fill="none"/></svg>
<svg style="left:50px;top:553px;" width="13" height="12" viewBox="0 0 13 12" fill="none"><path d="M1.3 7.7 L8.2 2 C9.6 0.8 10.6 1.6 9.8 3 L5.4 8.6 C4.6 9.8 5.4 10.6 6.6 9.8 L10.6 6.8 C11.8 6 12.4 6.8 11.8 7.8 L10.8 9.8 C10.4 10.8 11.2 11.4 12.8 10.4" stroke="#8669e0" stroke-width="1.5" stroke-linecap="round" stroke-linejoin="round"/></svg>
<svg style="left:0px;top:0px;" width="1" height="1" viewBox="0 0 1 1" fill="none"><path d="M77.2 560.8 C100 560.6 110 560.6 125 562.2 C160 563.6 200 562.6 230 563.6 C250 564.6 265 565.6 280.7 566.9" stroke="#b3a4ea" stroke-width="1"/></svg>
<div class="b" style="left:268.4px;top:597.2px;width:14px;height:14px;border-radius:3.2px;background:#3d82f6"></div>
<svg style="left:268.4px;top:597.2px;" width="14" height="14" viewBox="0 0 14 14" fill="none"><path d="M3.4 7.4 L6 10.2 L10.6 3.8" stroke="#fff" stroke-width="1.9" stroke-linecap="round" stroke-linejoin="round" fill="none"/></svg>
<svg style="left:50px;top:627.8px;" width="13" height="12" viewBox="0 0 13 12" fill="none"><path d="M1.3 7.7 L8.2 2 C9.6 0.8 10.6 1.6 9.8 3 L5.4 8.6 C4.6 9.8 5.4 10.6 6.6 9.8 L10.6 6.8 C11.8 6 12.4 6.8 11.8 7.8 L10.8 9.8 C10.4 10.8 11.2 11.4 12.8 10.4" stroke="#8669e0" stroke-width="1.5" stroke-linecap="round" stroke-linejoin="round"/></svg>
<svg style="left:0px;top:0px;" width="1" height="1" viewBox="0 0 1 1" fill="none"><path d="M104.7 646.2 C112 646.4 118 646.4 124 645.8 C160 642.4 200 638.6 240 633.6 C246 632.6 250 631.6 253.3 630.3" stroke="#917bde" stroke-width="1.5" stroke-linecap="round"/></svg>
<div class="b" style="left:268.4px;top:672.2px;width:14px;height:14px;border-radius:3.2px;background:#3d82f6"></div>
<svg style="left:268.4px;top:672.2px;" width="14" height="14" viewBox="0 0 14 14" fill="none"><path d="M3.4 7.4 L6 10.2 L10.6 3.8" stroke="#fff" stroke-width="1.9" stroke-linecap="round" stroke-linejoin="round" fill="none"/></svg>
<svg style="left:52.1px;top:701.2px;" width="10" height="6" viewBox="0 0 10 6" fill="none"><path d="M1 1 L5 5 L9 1" stroke="#8a8888" stroke-width="1.1" stroke-linecap="round" stroke-linejoin="round"/></svg>
<div class="b" style="left:338px;top:460.5px;width:692px;height:1.3000000000000114px;background:#f6ec78;"></div>
<div class="b" style="left:338px;top:517.6px;width:692px;height:1.2999999999999545px;background:#e0463c;"></div>
<svg style="left:0px;top:0px;" width="1" height="1" viewBox="0 0 1 1" fill="none"><path d="M340.6 570.1 C450 571 600 573 690 574.7 C740 575.8 780 578 800 580.1 C820 582 840 583.2 854.7 583.9" stroke="#c4b7ee" stroke-width="5.5"/><path d="M858.9 582.7 C880 582 890 581.4 900 580.8 C920 579.4 930 577.8 938 576.7 C970 573 990 571.4 1009 569.6 C1018 568.6 1026 567.6 1031.4 566.2" stroke="#c4b7ee" stroke-width="5.3"/></svg>
<div class="b" style="left:996px;top:685.6px;width:32px;height:32px;border-radius:50%;background:#e2594b"></div>
<svg style="left:1001px;top:690px;" width="22" height="22" viewBox="0 0 22 22" fill="none"><path d="M2.6 19.6 V13.6 C2.6 9.4 6 7 10.8 7 C15.6 7 19 9.4 19 13.6 V19.6 C19 20.4 18.4 21 17.6 21 H4 C3.2 21 2.6 20.4 2.6 19.6 Z" stroke="#fff" stroke-width="1.5"/><circle cx="7.6" cy="12.8" r="1" fill="#fff"/><circle cx="14" cy="12.8" r="1" fill="#fff"/><path d="M8.8 16.8 H12.8" stroke="#fff" stroke-width="1.3"/><path d="M5.6 8 L3.8 5 M16 8 L17.8 5" stroke="#fff" stroke-width="1.2"/><circle cx="3.4" cy="4.2" r="1.3" fill="#fff"/><circle cx="18.2" cy="4.2" r="1.3" fill="#fff"/><path d="M6.8 6.6 L7.4 3.2 L9.2 4.8 L10.8 2.2 L12.4 4.8 L14.2 3.2 L14.8 6.6 Z" fill="#fff"/></svg>
<div class="b" style="left:10px;top:738px;width:1048px;height:28px;background:#efecec;"></div>
<div class="b" style="left:10px;top:738px;width:1048px;height:1px;background:#d8d5d5;"></div>
<svg style="left:461px;top:747px;" width="10" height="10" viewBox="0 0 10 10" fill="none"><path d="M1.2 1 V9" stroke="#2a2a2a" stroke-width="1.3" stroke-linecap="round"/><path d="M8.4 1 L4.2 5 L8.4 9" stroke="#2a2a2a" stroke-width="1.3" stroke-linecap="round" stroke-linejoin="round"/></svg>
<svg style="left:486px;top:747px;" width="7" height="10" viewBox="0 0 7 10" fill="none"><path d="M5.8 1 L1.6 5 L5.8 9" stroke="#2a2a2a" stroke-width="1.3" stroke-linecap="round" stroke-linejoin="round"/></svg>
<div class="b" style="left:504px;top:742px;width:39.6px;height:18.4px;border-radius:5px;border:1px solid #cfcccc;background:#efeded"></div>
<svg style="left:574px;top:747px;" width="7" height="10" viewBox="0 0 7 10" fill="none"><path d="M1.2 1 L5.4 5 L1.2 9" stroke="#2a2a2a" stroke-width="1.3" stroke-linecap="round" stroke-linejoin="round"/></svg>
<svg style="left:597px;top:747px;" width="10" height="10" viewBox="0 0 10 10" fill="none"><path d="M8.8 1 V9" stroke="#2a2a2a" stroke-width="1.3" stroke-linecap="round"/><path d="M1.6 1 L5.8 5 L1.6 9" stroke="#2a2a2a" stroke-width="1.3" stroke-linecap="round" stroke-linejoin="round"/></svg>
<div class="b" style="left:613.6px;top:741.6px;width:55.4px;height:19.6px;border-radius:4px;border:1px solid #c9c4cf;background:#efeded"></div>
<svg style="left:657.6px;top:749.6px;" width="8" height="5" viewBox="0 0 8 5" fill="none"><path d="M1 1 L4 4 L7 1" stroke="#2a2a2a" stroke-width="1.3" stroke-linecap="round" stroke-linejoin="round"/></svg>
<svg style="left:678px;top:745.4px;" width="13" height="13" viewBox="0 0 13 13" fill="none"><circle cx="5.4" cy="5.4" r="4.3" stroke="#2a2a2a" stroke-width="1.3"/><path d="M8.6 8.6 L12 12" stroke="#2a2a2a" stroke-width="1.6" stroke-linecap="round"/><path d="M3.4 5.4 H7.4 M5.4 3.4 V7.4" stroke="#2a2a2a" stroke-width="1.1"/></svg>
<svg style="left:714px;top:745px;" width="14" height="14" viewBox="0 0 14 14" fill="none"><rect x="0.7" y="0.7" width="12.6" height="12.6" rx="2.6" stroke="#2a2a2a" stroke-width="1.2"/><path d="M3.4 5.4 V4.4 C3.4 3.8 3.8 3.4 4.4 3.4 H5.4 M8.6 3.4 H9.6 C10.2 3.4 10.6 3.8 10.6 4.4 V5.4 M10.6 8.6 V9.6 C10.6 10.2 10.2 10.6 9.6 10.6 H8.6 M5.4 10.6 H4.4 C3.8 10.6 3.4 10.2 3.4 9.6 V8.6" stroke="#2a2a2a" stroke-width="1.1"/></svg>
<svg style="left:742px;top:745px;" width="14" height="14" viewBox="0 0 14 14" fill="none"><rect x="0.7" y="0.7" width="12.6" height="12.6" rx="2.6" stroke="#2a2a2a" stroke-width="1.2"/><path d="M5.2 5 L7 3.4 L8.8 5 M5.2 9 L7 10.6 L8.8 9" stroke="#2a2a2a" stroke-width="1" stroke-linecap="round" stroke-linejoin="round"/></svg>
<svg style="left:770px;top:745px;" width="14" height="14" viewBox="0 0 14 14" fill="none"><rect x="0.7" y="0.7" width="12.6" height="12.6" rx="2.6" stroke="#2a2a2a" stroke-width="1.2"/><path d="M5 5.2 L3.4 7 L5 8.8 M9 5.2 L10.6 7 L9 8.8" stroke="#2a2a2a" stroke-width="1" stroke-linecap="round" stroke-linejoin="round"/></svg>
<svg style="left:798px;top:745px;" width="14" height="14" viewBox="0 0 14 14" fill="none"><rect x="0.7" y="0.7" width="12.6" height="12.6" rx="2.6" stroke="#2a2a2a" stroke-width="1.2"/><text x="7" y="9.4" font-family="Liberation Sans" font-size="6.6" font-weight="700" text-anchor="middle" fill="#2a2a2a">1:1</text></svg>
<div class="b" style="left:821px;top:742px;width:1px;height:20px;background:#dad7d7;"></div>
<svg style="left:827px;top:744px;" width="16" height="16" viewBox="0 0 16 16" fill="none"><circle cx="8" cy="8" r="2.7" stroke="#2a2a2a" stroke-width="1.1"/><path d="M8 8 m4.60 0.00 l1.90 0.00" stroke="#2a2a2a" stroke-width="1" stroke-linecap="round"/><path d="M8 8 m3.25 3.25 l1.34 1.34" stroke="#2a2a2a" stroke-width="1" stroke-linecap="round"/><path d="M8 8 m-0.00 4.60 l-0.00 1.90" stroke="#2a2a2a" stroke-width="1" stroke-linecap="round"/><path d="M8 8 m-3.25 3.25 l-1.34 1.34" stroke="#2a2a2a" stroke-width="1" stroke-linecap="round"/><path d="M8 8 m-4.60 -0.00 l-1.90 -0.00" stroke="#2a2a2a" stroke-width="1" stroke-linecap="round"/><path d="M8 8 m-3.25 -3.25 l-1.34 -1.34" stroke="#2a2a2a" stroke-width="1" stroke-linecap="round"/><path d="M8 8 m0.00 -4.60 l0.00 -1.90" stroke="#2a2a2a" stroke-width="1" stroke-linecap="round"/><path d="M8 8 m3.25 -3.25 l1.34 -1.34" stroke="#2a2a2a" stroke-width="1" stroke-linecap="round"/></svg>
<svg style="left:942px;top:749.6px;" width="9" height="5.4" viewBox="0 0 9 5.4" fill="none"><path d="M1 1 L4.5 4.4 L8 1" stroke="#2a2a2a" stroke-width="1.3" stroke-linecap="round" stroke-linejoin="round"/></svg>
<div class="b" style="left:958px;top:742px;width:1px;height:20px;background:#dad7d7;"></div>
<div class="b" style="left:963px;top:741.2px;width:27px;height:21.4px;border-radius:5px;background:#d0cece"></div>
<div class="b" style="left:1027px;top:741.2px;width:27.6px;height:21.4px;border-radius:5px;background:#d0cece"></div>
<svg style="left:971.4px;top:745.6px;" width="11" height="12.6" viewBox="0 0 11 12.6" fill="none"><rect x="0.7" y="0.7" width="9.6" height="11.2" rx="1.6" stroke="#2a2a2a" stroke-width="1.2"/><path d="M2.8 4.2 H8.2 M3.8 6.6 H7.2" stroke="#2a2a2a" stroke-width="1.1"/></svg>
<svg style="left:1003px;top:745.6px;" width="12" height="12.6" viewBox="0 0 12 12.6" fill="none"><rect x="0.7" y="0.7" width="4.4" height="11.2" rx="1.3" stroke="#2a2a2a" stroke-width="1.2"/><rect x="6.9" y="0.7" width="4.4" height="11.2" rx="1.3" stroke="#2a2a2a" stroke-width="1.2"/><path d="M2 5 H3.8 M2 7.4 H3.8 M8.2 5 H10 M8.2 7.4 H10" stroke="#2a2a2a" stroke-width="0.9"/></svg>
<svg style="left:1035.6px;top:746px;" width="10.4" height="12.6" viewBox="0 0 10.4 12.6" fill="none"><path d="M0.9 0.8 V3 Q0.9 4.6 2.5 4.6 H7.9 Q9.5 4.6 9.5 3 V0.8 M0.9 11.9 V9.6 Q0.9 8 2.5 8 H7.9 Q9.5 8 9.5 9.6 V11.9" stroke="#2a2a2a" stroke-width="1.3" stroke-linecap="round"/><path d="M3.4 1.7 H7 M3.4 9.9 H7" stroke="#2a2a2a" stroke-width="1.1"/></svg>
<div class="t" style="left:105.20px;top:21.00px;font-size:12px;color:#f4f4f4;letter-spacing:0.063px;-webkit-text-stroke:0.35px;">file-1.pdf</div>
<div class="t" style="left:107.00px;top:53.00px;font-size:11.2px;color:#e2665a;letter-spacing:0.219px;">Home</div>
<div class="t" style="left:171.70px;top:53.00px;font-size:11.2px;letter-spacing:0.233px;">Annotazioni</div>
<div class="t" style="left:244.20px;top:53.00px;font-size:11.2px;letter-spacing:0.261px;">Compila e firma</div>
<div class="t" style="left:342.00px;top:53.00px;font-size:11.2px;letter-spacing:0.288px;">Modificare</div>
<div class="t" style="left:431.70px;top:53.00px;font-size:11.2px;letter-spacing:-0.069px;">Pagine</div>
<div class="t" style="left:510.00px;top:53.00px;font-size:11.2px;letter-spacing:0.159px;">Modulo</div>
<div class="t" style="left:583.70px;top:53.00px;font-size:11.2px;letter-spacing:0.328px;">Strumenti</div>
<div class="t" style="left:667.00px;top:53.00px;font-size:11.2px;letter-spacing:0.261px;">Proteggi</div>
<div class="t" style="left:16.70px;top:105.00px;font-size:11.5px;letter-spacing:-0.127px;">Seleziona</div>
<div class="t" style="left:88.00px;top:105.00px;font-size:11.5px;letter-spacing:-0.260px;">Mano</div>
<div class="t" style="left:139.00px;top:105.00px;font-size:11.5px;letter-spacing:-0.109px;">Evidenziare</div>
<div class="t" style="left:218.00px;top:105.00px;font-size:11.5px;letter-spacing:-0.184px;">Forme</div>
<div class="t" style="left:280.00px;top:105.00px;font-size:11.5px;letter-spacing:0.125px;">Testo</div>
<div class="t" style="left:332.50px;top:105.00px;font-size:11.5px;letter-spacing:0.071px;">Convertire</div>
<div class="t" style="left:408.00px;top:105.00px;font-size:11.5px;letter-spacing:-0.298px;">Firma</div>
<div class="t" style="left:457.70px;top:105.00px;font-size:11.5px;letter-spacing:0.091px;">Francobollo</div>
<div class="t" style="left:542.50px;top:105.00px;font-size:11.5px;transform:scaleX(0.8802);transform-origin:0 0;">OCR</div>
<div class="t" style="left:589.50px;top:105.00px;font-size:11.5px;letter-spacing:-0.060px;">Ritaglia la Pagina</div>
<div class="t" style="left:698.00px;top:105.00px;font-size:11.5px;letter-spacing:-0.122px;">Redigi</div>
<div class="t" style="left:753.20px;top:105.00px;font-size:11.5px;letter-spacing:-0.068px;">Stampa</div>
<div class="t" style="left:874.50px;top:104.00px;font-size:11.5px;letter-spacing:-0.114px;">Record Go</div>
<div class="t" style="left:943.20px;top:105.00px;font-size:11.5px;letter-spacing:0.006px;">PDFgear per mobile</div>
<div class="t" style="left:52.70px;top:130.00px;font-size:11.2px;color:#333;letter-spacing:0.263px;">Annotazioni</div>
<div class="t" style="left:74.60px;top:159.00px;font-size:13.5px;letter-spacing:0.049px;">Seleziona tutto</div>
<div class="t" style="left:175.00px;top:186.00px;font-size:12.4px;color:#222;transform:scaleX(1.0716);transform-origin:0 0;">Rimuovi annotazione</div>
<div class="t" style="left:68.60px;top:198.00px;font-size:12px;letter-spacing:-0.154px;">Pagina 1</div>
<div class="t" style="left:52.30px;top:222.00px;font-size:13.6px;color:#000;font-weight:700;">A</div>
<div class="t" style="left:76.60px;top:227.00px;font-size:11.5px;color:#111;transform:scaleX(1.1086);transform-origin:0 0;">Vestibulum neque massa,</div>
<div class="t" style="left:76.60px;top:242.00px;font-size:11.5px;color:#111;transform:scaleX(1.1202);transform-origin:0 0;">scelerisque sit amet ligula eu,</div>
<div class="t" style="left:76.60px;top:257.00px;font-size:11.5px;color:#111;transform:scaleX(1.1030);transform-origin:0 0;">congue molestie mi. Praesent ut</div>
<div class="t" style="left:76.30px;top:294.00px;font-size:11.2px;color:#8b8989;transform:scaleX(1.0514);transform-origin:0 0;">katrina 22 dic 2025, 11:23</div>
<div class="t" style="left:52.30px;top:342.00px;font-size:13.6px;color:#000;font-weight:700;">A</div>
<div class="t" style="left:76.60px;top:347.00px;font-size:11.5px;color:#222;transform:scaleX(1.1032);transform-origin:0 0;">condimentum. Vivamus dapibus</div>
<div class="t" style="left:76.60px;top:362.00px;font-size:11.5px;color:#222;transform:scaleX(1.0894);transform-origin:0 0;">sodales ex, vitae malesuada ipsum</div>
<div class="t" style="left:76.60px;top:377.00px;font-size:11.5px;color:#222;transform:scaleX(1.0923);transform-origin:0 0;">cursus</div>
<div class="t" style="left:76.30px;top:399.00px;font-size:11.2px;color:#8b8989;transform:scaleX(1.0514);transform-origin:0 0;">katrina 22 dic 2025, 11:24</div>
<div class="t" style="left:52.30px;top:447.00px;font-size:13.6px;color:#000;font-weight:700;">A</div>
<div class="t" style="left:76.60px;top:452.00px;font-size:11.5px;color:#222;transform:scaleX(1.1094);transform-origin:0 0;">nisl blandit. Integer lacinia ante ac</div>
<div class="t" style="left:76.60px;top:467.00px;font-size:11.5px;color:#222;transform:scaleX(1.1188);transform-origin:0 0;">libero lobortis imperdiet. Nullam</div>
<div class="t" style="left:76.60px;top:482.00px;font-size:11.5px;color:#222;transform:scaleX(1.1005);transform-origin:0 0;">mollis convallis ipsum,</div>
<div class="t" style="left:76.30px;top:504.00px;font-size:11.2px;color:#8b8989;transform:scaleX(1.0514);transform-origin:0 0;">katrina 22 dic 2025, 11:24</div>
<div class="t" style="left:76.30px;top:579.00px;font-size:11.2px;color:#8b8989;transform:scaleX(1.0514);transform-origin:0 0;">katrina 22 dic 2025, 11:24</div>
<div class="t" style="left:76.30px;top:654.00px;font-size:11.2px;color:#8b8989;transform:scaleX(1.0514);transform-origin:0 0;">katrina 22 dic 2025, 11:24</div>
<div class="t" style="left:68.60px;top:698.00px;font-size:12px;">Pagina 2</div>
<div class="t" style="left:279.30px;top:698.00px;font-size:12.4px;">7</div>
<div class="t" style="left:76.60px;top:727.00px;font-size:11.5px;color:#222;transform:scaleX(1.0858);transform-origin:0 0;">Rettangolo</div>
<div class="t" style="left:520.50px;top:746.00px;font-size:12.4px;">1</div>
<div class="t" style="left:548.00px;top:746.00px;font-size:12.4px;letter-spacing:0.609px;">/ 5</div>
<div class="t" style="left:616.40px;top:746.00px;font-size:12.4px;transform:scaleX(0.8895);transform-origin:0 0;">144%</div>
<div class="t" style="left:844.60px;top:746.00px;font-size:12.4px;letter-spacing:-0.267px;">Modalità giorno</div>
<div class="b" style="left:41px;top:149.2px;width:131.9px;height:34.7px;border:3px solid #f20d0d;filter:drop-shadow(1.6px 2px 1.6px rgba(0,0,0,.62))"></div>
<div class="b" style="left:215.1px;top:150.1px;width:42.8px;height:33.8px;border:3px solid #f20d0d;filter:drop-shadow(1.6px 2px 1.6px rgba(0,0,0,.62))"></div>
<div class="b" style="left:76.3px;top:457px;width:192.8px;height:1.3000000000000114px;background:#e0392f;"></div>
<div class="b" style="left:76.3px;top:472.1px;width:180.7px;height:1.2999999999999545px;background:#e0392f;"></div>
<div class="b" style="left:76.3px;top:487.2px;width:125.8px;height:1.3000000000000114px;background:#e0392f;"></div>
</div>
</body></html>
